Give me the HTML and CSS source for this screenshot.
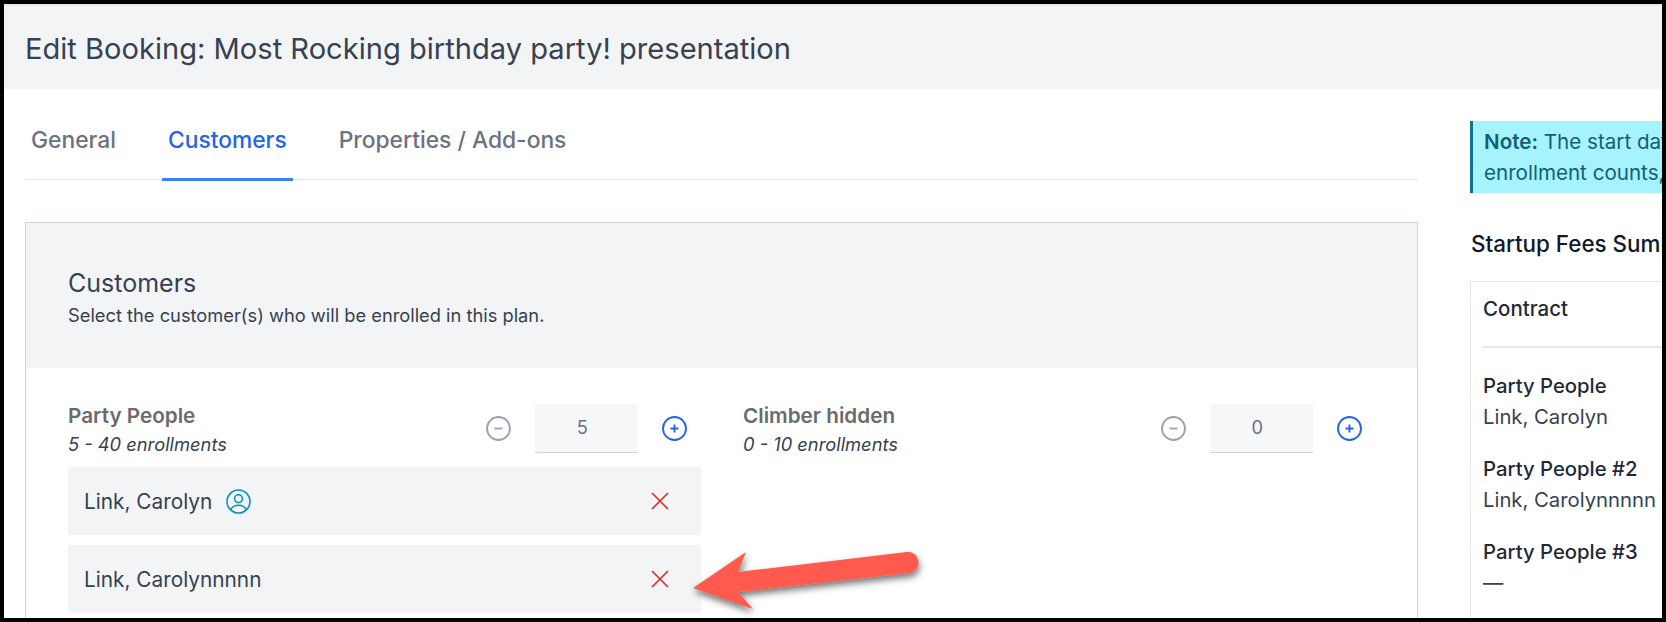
FILE: index.html
```html
<!DOCTYPE html>
<html lang="en">
<head>
  <meta charset="UTF-8" />
  <meta name="viewport" content="width=device-width, initial-scale=1.0" />
  <title>Edit Booking</title>
  <link rel="stylesheet" href="styles.css">
</head>
<body>

  <svg class="icon-defs" width="0" height="0">
    <symbol id="icon-minus" viewBox="0 0 25 25">
      <circle cx="12.5" cy="12.5" r="11.5" fill="none" stroke="currentColor" stroke-width="1.9" />
      <path d="M8.5 12.5h8" fill="none" stroke="currentColor" stroke-width="1.9" />
    </symbol>
    <symbol id="icon-plus" viewBox="0 0 25 25">
      <circle cx="12.5" cy="12.5" r="11.5" fill="none" stroke="currentColor" stroke-width="1.9" />
      <path d="M8.5 12.5h8M12.5 8.5v8" fill="none" stroke="currentColor" stroke-width="1.9" />
    </symbol>
    <symbol id="icon-close" viewBox="0 0 18 18">
      <path d="M1 1l16 16M17 1L1 17" fill="none" stroke="currentColor" stroke-width="1.6" />
    </symbol>
  </svg>

  <div class="window">
    <header class="page-header">
      <h1>Edit Booking: Most Rocking birthday party! presentation</h1>
    </header>

    <div class="main">
      <div class="left">
        <nav class="tabs">
          <a href="#" class="tab">General</a>
          <a href="#" class="tab active">Customers</a>
          <a href="#" class="tab">Properties / Add-ons</a>
        </nav>

        <section class="card">
          <div class="card-head">
            <h2>Customers</h2>
            <p>Select the customer(s) who will be enrolled in this plan.</p>
          </div>

          <div class="card-body">
            <div class="group">
              <div class="group-head">
                <div>
                  <div class="group-name">Party People</div>
                  <div class="group-range">5 - 40 enrollments</div>
                </div>
                <div class="stepper">
                  <svg class="step-icon off"><use href="#icon-minus" /></svg>
                  <span class="qty">5</span>
                  <svg class="step-icon on"><use href="#icon-plus" /></svg>
                </div>
              </div>
              <div class="person">
                <span class="person-name">Link, Carolyn</span>
                <svg class="user-icon" viewBox="0 0 25 25" fill="none" stroke="currentColor" stroke-width="1.6">
                  <circle cx="12.5" cy="12.5" r="11.5" />
                  <circle cx="12.5" cy="9.7" r="3.9" />
                  <path d="M4.6 20.6c1.6-3 4.5-4.3 7.9-4.3s6.3 1.3 7.9 4.3" />
                </svg>
                <svg class="close-icon"><use href="#icon-close" /></svg>
              </div>
              <div class="person">
                <span class="person-name">Link, Carolynnnnn</span>
                <svg class="close-icon"><use href="#icon-close" /></svg>
              </div>
            </div>

            <div class="group">
              <div class="group-head">
                <div>
                  <div class="group-name">Climber hidden</div>
                  <div class="group-range">0 - 10 enrollments</div>
                </div>
                <div class="stepper">
                  <svg class="step-icon off"><use href="#icon-minus" /></svg>
                  <span class="qty">0</span>
                  <svg class="step-icon on"><use href="#icon-plus" /></svg>
                </div>
              </div>
            </div>
          </div>
        </section>
      </div>

      <aside class="right">
        <div class="note"><b>Note:</b> The start date<br>enrollment counts,</div>
        <h3>Startup Fees Summary</h3>
        <div class="summary">
          <div class="summary-title">Contract</div>
          <dl class="summary-list">
            <dt>Party People</dt>
            <dd>Link, Carolyn</dd>
            <dt>Party People #2</dt>
            <dd>Link, Carolynnnnn</dd>
            <dt>Party People #3</dt>
            <dd>—</dd>
          </dl>
        </div>
      </aside>
    </div>

    <!-- annotation drawn on top of the screenshot -->
    <svg class="arrow" viewBox="0 0 260 100" width="260" height="100">
      <defs>
        <filter id="arrow-shadow" x="-10%" y="-20%" width="125%" height="160%">
          <feDropShadow dx="1" dy="4" stdDeviation="3.5" flood-color="#000" flood-opacity="0.55" />
        </filter>
      </defs>
      <path filter="url(#arrow-shadow)" fill="#ff5a4d"
        d="M3 46 L56 10 L48 30 L217 10 A10.5 10.5 0 0 1 219 31 L48 50 L63 67 Z" />
    </svg>
  </div>

</body>
</html>
```

FILE: styles.css
```css
* {
  box-sizing: border-box;
}

html, body {
  height: 100%;
}

body {
  margin: 0;
  padding: 4px 4px 4px 4px;
  background: #000;
  font-family: Inter, 'Noto Sans', sans-serif;
  color: #374151;
  overflow: hidden;
}

.icon-defs {
  position: absolute;
}

.window {
  position: relative;
  height: 614px;
  background: #fff;
  overflow: hidden;
}

.page-header {
  height: 85px;
  padding: 2px 21px 0;
  display: flex;
  align-items: center;
  background: #f3f4f6;
  border-top: 2px solid #e5e7eb;
}

.page-header h1 {
  margin: 0;
  font-size: 29.1px;
  font-weight: 400;
  color: #374151;
}

.main {
  display: grid;
  grid-template-columns: 1393px 400px;
  column-gap: 52px;
  padding: 32px 0 0 21px;
}

/* tabs */
.tabs {
  display: flex;
  height: 59px;
  gap: 40px;
  border-bottom: 1px solid #e5e7eb;
}

.tab {
  height: 60px;
  padding: 0 6px;
  font-size: 22.8px;
  font-weight: 500;
  line-height: 37px;
  color: #6b7280;
  text-decoration: none;
}

.tab.active {
  color: #2563eb;
  border-bottom: 3px solid #3b82f6;
}

/* customers card */
.card {
  margin-top: 42px;
  border: 1px solid #d1d5db;
}

.card-head {
  height: 145px;
  padding: 43px 42px 0;
  background: #f3f4f6;
}

.card-head h2 {
  margin: 0;
  font-size: 25px;
  line-height: 34px;
  font-weight: 400;
}

.card-head p {
  margin: 3px 0 0;
  font-size: 18.3px;
  line-height: 24px;
}

.card-body {
  display: grid;
  grid-template-columns: 633px 633px;
  column-gap: 42px;
  padding: 36px 42px 60px;
}

.group-head {
  display: flex;
  justify-content: space-between;
  align-items: center;
  height: 49px;
  margin-bottom: 14px;
  padding-right: 14px;
}

.group-name {
  font-size: 20.7px;
  line-height: 24px;
  font-weight: 600;
  color: #6b6b6b;
}

.group-range {
  margin-top: 6px;
  font-size: 18.3px;
  line-height: 20px;
  font-style: italic;
}

.stepper {
  display: flex;
  align-items: center;
  gap: 24px;
}

.step-icon {
  width: 25px;
  height: 25px;
}

.step-icon.off {
  color: #9ca3af;
}

.step-icon.on {
  color: #2563eb;
}

.qty {
  width: 103.5px;
  height: 49px;
  padding-right: 8px;
  background: #f6f7f9;
  border-bottom: 1px solid #d1d5db;
  font-size: 18.3px;
  line-height: 46px;
  text-align: center;
  color: #6b7280;
}

.person {
  display: flex;
  align-items: center;
  height: 68px;
  margin-bottom: 10px;
  padding: 0 32px 0 16px;
  background: #f3f4f6;
}

.person-name {
  font-size: 20.8px;
}

.user-icon {
  width: 25px;
  height: 25px;
  margin-left: 14px;
  color: #0891b2;
}

.close-icon {
  width: 18px;
  height: 18px;
  margin-left: auto;
  color: #dc2626;
}

/* right column */
.note {
  height: 72px;
  padding: 5px 11px;
  background: #a5f3fc;
  border-left: 3px solid #0e7490;
  font-size: 20.6px;
  line-height: 31px;
  color: #155e75;
  white-space: nowrap;
}

.note b {
  font-weight: 600;
}

.right h3 {
  margin: 36px 0 22px 1px;
  font-size: 22.4px;
  line-height: 30px;
  font-weight: 500;
  color: #111827;
}

.summary {
  padding: 0 0 30px 12px;
  border: 1px solid #e5e7eb;
}

.summary-title {
  height: 66px;
  padding-top: 14px;
  border-bottom: 2px solid #e5e7eb;
  font-size: 20.5px;
  line-height: 26px;
  font-weight: 500;
  color: #1f2937;
}

.summary-list {
  margin: 25px 0 0;
  font-size: 20.3px;
  line-height: 26px;
}

.summary-list dt {
  font-weight: 500;
  color: #1f2937;
}

.summary-list dd {
  margin: 5px 0 26px;
}

/* annotation */
.arrow {
  position: absolute;
  left: 686px;
  top: 538px;
  overflow: visible;
}
```
